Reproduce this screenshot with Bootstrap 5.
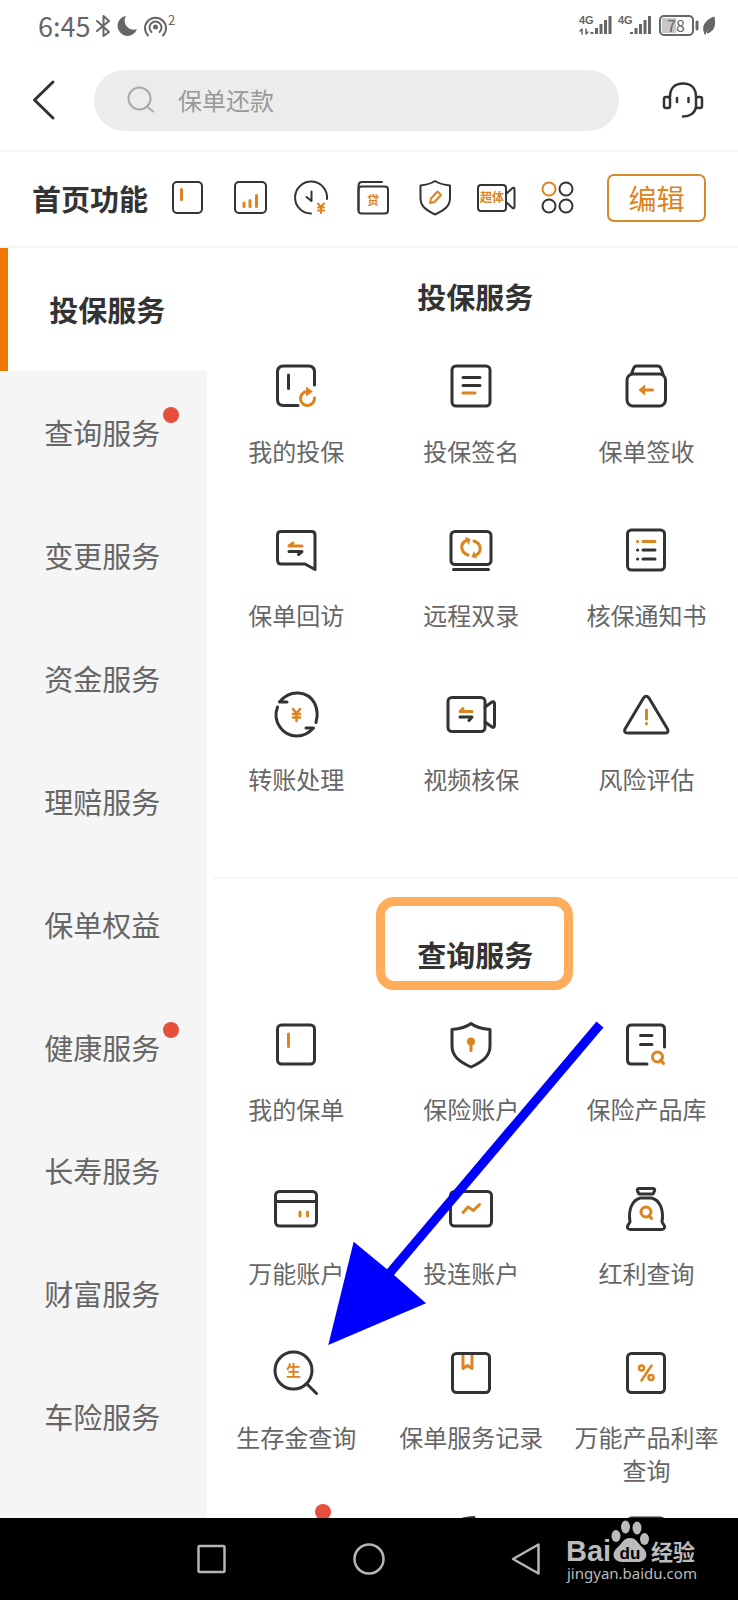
<!DOCTYPE html>
<html lang="zh-CN">
<head>
<meta charset="utf-8">
<meta name="viewport" content="width=device-width, initial-scale=1">
<title>投保服务</title>
<link href="https://cdn.jsdelivr.net/npm/bootstrap@5.3.0/dist/css/bootstrap.min.css" rel="stylesheet">
<style>
  :root { --ink: #333; --soft: #666; --accent: #dd831f; --line: #f6f6f6; }
  body { font-family: "Noto Sans CJK SC", sans-serif; color: var(--ink); background: #fff; }
  svg { display: block; fill: none; stroke: var(--ink); stroke-width: 3; stroke-linecap: round; stroke-linejoin: round; }
  svg text { stroke: none; fill: var(--accent); font-family: "Noto Sans CJK SC", sans-serif; }
  svg .ac { stroke: var(--accent); }
  svg .fa { fill: var(--accent); stroke: none; }
  .plain { background: none; border: 0; padding: 0; }

  .status { height: 52px; padding: 0 20px 0 38px; color: #666; }
  .clock { font-size: 27px; line-height: 52px; }
  .status svg { stroke: #666; stroke-width: 2; }
  .status svg text { fill: #666; }
  .status .net { font-family: "Liberation Sans Narrow", "Liberation Sans", sans-serif; font-weight: 700; }

  .topbar { height: 98px; padding: 0 31px 2px 30px; }
  .search { margin: 0 40px 0 36px; height: 61px; background: #ececec; padding: 0 32px; }
  .search input { font-size: 24px; line-height: 36px; padding: 0; margin-left: 24px; }
  .search input, .search input:focus { background: none; border: 0; box-shadow: none; }
  .search input::placeholder { color: #999; opacity: 1; }
  .search svg { stroke: #aaa; stroke-width: 2; }

  .shortcuts { height: 98px; padding: 0 32px 2px; border-top: 2px solid var(--line); border-bottom: 2px solid var(--line); }
  .heading { font-size: 29px; line-height: 40px; font-weight: 700; margin: 0; }
  .quick { margin: 0 29px 0 20px; }
  .quick svg { stroke-width: 2; }
  .btn-edit { width: 99px; height: 48px; padding: 0; border: 2px solid #d68a2c; border-radius: 7px; font-size: 28px; line-height: 40px; color: var(--accent); }

  .side { width: 28%; background: #f5f5f5; }
  .side a { height: 123px; font-size: 29px; color: var(--soft); padding-right: 2px; }
  .side a.active { background: #fff; color: var(--ink); font-weight: 700; border-left: 8px solid #f07800; padding-right: 0; }
  .dot { width: 16px; height: 16px; border-radius: 50%; background: #e74f3d; position: absolute; }
  .side .dot { right: -19px; top: -4px; }

  .section { margin-left: 6px; }
  .section + .section { border-top: 2px solid var(--line); }
  .section-1 { padding: 28px 0 25px; }
  .section-2 { padding-top: 55px; }
  .section .heading { margin-bottom: 44px; }
  .tiles { margin: 0 4px 0 -4px; }
  .tile { height: 164px; padding: 0 12px; color: var(--soft); font-size: 24px; line-height: 33px; text-decoration: none; text-align: center; }
  .tile svg { margin: 0 auto 22px; width: 52px; height: 52px; }
  .tile .dot { left: 50%; top: -6px; margin-left: 19px; }
  .frame { position: absolute; top: -37px; bottom: -16px; left: -41px; right: -40px; border: 9px solid #ffad5b; border-radius: 18px; }
  .pointer { position: absolute; left: 107px; top: 2px; pointer-events: none; }
  .pointer svg { stroke: none; fill: #00f; }

  .sysnav { height: 82px; background: #000; gap: 109px; }
  .sysnav button { width: 48px; height: 48px; }
  .sysnav svg { stroke: #b5b5b5; stroke-width: 2.500; }
  .sysnav .wm { position: absolute; right: 38px; top: 0; stroke: none; fill: #bbb; }
  .wm text { fill: #bbb; }
  .wm .latin { font-family: "Liberation Sans", sans-serif; font-weight: 700; }
  .wm .paw { fill: #000; }
  .wm .url { font-family: "Noto Sans", sans-serif; }
</style>
</head>
<body>
<div class="vh-100 d-flex flex-column overflow-hidden">

  <div class="status d-flex align-items-center flex-shrink-0">
    <span class="clock">6:45</span>
    <svg class="ms-1" width="88" height="36" viewBox="95 8 88 36">
      <path d="M98 21 110 32 104.500 36V16L110 21 98 31"/>
      <path d="M127 16a10 10 0 1 0 11 13 9 9 0 0 1-11-13z" fill="#666" stroke="none"/>
      <circle cx="156.500" cy="27" r="2.500" fill="#666" stroke="none"/>
      <path d="M152.500 32a6 6 0 1 1 8 0M149 35.500a10.500 10.500 0 1 1 15 0"/>
      <text x="169" y="25" font-size="13">2</text>
    </svg>
    <svg class="ms-auto" width="142" height="36" viewBox="576 8 142 36">
      <text class="net" x="579" y="24" font-size="11">4G</text>
      <text class="net" x="618" y="24" font-size="11">4G</text>
      <path d="M582 34v-5l-2 2M586 29v5l2-2" stroke-width="1.500"/>
      <path d="M592 34v-2M596.500 34v-6M601 34v-10M605.500 34V20M610 34V16M631.500 34v-2M636 34v-6M640.500 34v-10M645 34V20M649.500 34V16" stroke-width="3" stroke-linecap="butt"/>
      <path d="M662 18h14v15h-14z" fill="#c6c6c6" stroke="none"/>
      <rect x="660" y="16" width="33" height="19" rx="4"/>
      <path d="M697 22v7" stroke-width="3"/>
      <text x="676" y="32" font-size="16" text-anchor="middle">78</text>
      <path d="M705 34c-4-8 1-14 9-17 2 9-1 15-7 16l4-9-5 8z" fill="#666" stroke="#666" stroke-width="1"/>
    </svg>
  </div>

  <header class="topbar d-flex align-items-center flex-shrink-0">
    <button class="plain" aria-label="返回">
      <svg width="28" height="44" viewBox="30 78 28 44"><path d="M53 82 34.500 100 53 118"/></svg>
    </button>
    <div class="search flex-grow-1 rounded-pill d-flex align-items-center">
      <svg class="flex-shrink-0" width="28" height="28" viewBox="126 86 28 28"><circle cx="139.500" cy="98.500" r="11"/><path d="m147 106.500 6 5"/></svg>
      <input class="form-control" type="text" placeholder="保单还款" aria-label="搜索">
    </div>
    <button class="plain" aria-label="客服">
      <svg width="48" height="48" viewBox="0 0 48 48">
        <rect x="5" y="21" width="6" height="11" rx="2" stroke-width="2.500"/><rect x="37" y="21" width="6" height="11" rx="2" stroke-width="2.500"/>
        <path d="M11 21C11 12 16 7.500 24 7.500S37 12 37 21M37 31c-1 6-6 9.500-13 9.500M18 22v4M29.500 22v4" stroke-width="2.500"/>
      </svg>
    </button>
  </header>

  <div class="shortcuts d-flex align-items-center flex-shrink-0">
    <h2 class="heading text-nowrap">首页功能</h2>
    <div class="quick flex-grow-1 d-flex justify-content-between">
      <svg width="40" height="40"><rect x="5" y="4" width="29" height="31" rx="4"/><path class="ac" stroke-width="3" d="M13.500 11.500v10"/></svg>
      <svg width="40" height="40"><rect x="5" y="4" width="31" height="31" rx="4"/><path class="ac" stroke-width="3" d="M14 28.500V25M20 28.500v-6M26.500 28.500V17.500"/></svg>
      <svg width="40" height="40"><path d="M36 21A16 16 0 1 0 20 35.500M20.500 13.500v9.500L15.500 19"/><path class="ac" d="m27 25.500 3 3.500 3-3.500M30 29v6M27 29.500h6M27 32.500h6"/></svg>
      <svg width="40" height="40"><path d="M29 4H9Q5.500 4 5.500 8V32"/><rect x="5.500" y="8.500" width="29.500" height="27" rx="3"/><text x="20" y="27" font-size="12" font-weight="700" text-anchor="middle">贷</text></svg>
      <svg width="40" height="40"><path d="M20 3C15 6 11 7 5.500 7.500V20c0 8 5 12 14.500 16.500C30 32 35 28 35 20V7.500C29 7 25 6 20 3z"/><path class="ac" d="m15 25 1-4.500 6.500-7 3.500 3.500-6.500 7z"/></svg>
      <svg width="40" height="40"><rect x="2" y="7" width="28" height="26" rx="3"/><path d="m30 16 6.500-6q2-1 2 1.500v17q0 2.500-2 1.500L30 24"/><text x="16" y="24" font-size="12" font-weight="700" text-anchor="middle">超体</text></svg>
      <svg width="40" height="40"><circle class="ac" cx="11" cy="11" r="6.500"/><circle cx="28" cy="11" r="6.500"/><circle cx="11" cy="28" r="6.500"/><circle cx="28" cy="28" r="6.500"/></svg>
    </div>
    <button class="btn btn-edit">编辑</button>
  </div>

  <main class="d-flex flex-grow-1 overflow-hidden">
    <nav class="side flex-shrink-0">
      <a class="active d-flex align-items-center justify-content-center text-decoration-none" href="#"><span>投保服务</span></a>
      <a class="d-flex align-items-center justify-content-center text-decoration-none" href="#"><span class="position-relative">查询服务<i class="dot"></i></span></a>
      <a class="d-flex align-items-center justify-content-center text-decoration-none" href="#"><span>变更服务</span></a>
      <a class="d-flex align-items-center justify-content-center text-decoration-none" href="#"><span>资金服务</span></a>
      <a class="d-flex align-items-center justify-content-center text-decoration-none" href="#"><span>理赔服务</span></a>
      <a class="d-flex align-items-center justify-content-center text-decoration-none" href="#"><span>保单权益</span></a>
      <a class="d-flex align-items-center justify-content-center text-decoration-none" href="#"><span class="position-relative">健康服务<i class="dot"></i></span></a>
      <a class="d-flex align-items-center justify-content-center text-decoration-none" href="#"><span>长寿服务</span></a>
      <a class="d-flex align-items-center justify-content-center text-decoration-none" href="#"><span>财富服务</span></a>
      <a class="d-flex align-items-center justify-content-center text-decoration-none" href="#"><span>车险服务</span></a>
    </nav>

    <div class="flex-grow-1">
      <section class="section section-1">
        <h2 class="heading text-center">投保服务</h2>
        <div class="tiles row g-0">
          <a class="tile col-4" href="#"><svg viewBox="0 0 52 52"><path d="M44.500 25V12q0-6-6-6h-25q-6 0-6 6v27.500q0 6 6 6H28M18.500 15v13.500"/><path class="ac" d="M44.500 38a7 7 0 1 1-7.500-6.500"/><path class="fa" d="m36 26.500 7 5-7 5z"/></svg>我的投保</a>
          <a class="tile col-4" href="#"><svg viewBox="0 0 52 52"><rect x="7" y="6" width="38" height="40" rx="4"/><path d="M18 17.500h17M18 25.500h17"/><path class="ac" d="M18 33h12"/></svg>投保签名</a>
          <a class="tile col-4" href="#"><svg viewBox="0 0 52 52"><path d="m11.500 14 2-5.500q1-2.500 3-2.500h21q2.500 0 3.500 2.500l2 5.500"/><rect x="7" y="14" width="38.500" height="32" rx="6"/><path class="ac" d="M24 30h8.500"/><path class="fa" d="m18.500 30 6.500-5.500v11z"/></svg>保单签收</a>

          <a class="tile col-4" href="#"><svg viewBox="0 0 52 52"><path d="M45 45.500V11q0-3.500-3.500-3.500H11Q7.500 7.500 7.500 11v25q0 4 3.500 4h24z"/><path class="ac" d="M19 22h13M19 22l4-3"/><path d="M19 27.500h13l-3.500 3"/></svg>保单回访</a>
          <a class="tile col-4" href="#"><svg viewBox="0 0 52 52"><rect x="6" y="7.500" width="40" height="33" rx="4"/><path d="M8.500 45.500h35"/><path class="ac" d="M23 31c-8-3-8-12-1.500-14.500M29 17c8 3 8 11 1.500 14.500"/><path class="fa" d="m20 13 5.500 2-2 6zM32 34.500 26.500 33l2.500-6z"/></svg>远程双录</a>
          <a class="tile col-4" href="#"><svg viewBox="0 0 52 52"><rect x="7.500" y="6" width="37" height="40" rx="4"/><path class="ac" d="M17.500 17.500h.2M23 17.500h12"/><path d="M17.500 26h.2M23 26h12M17.500 35h.2M23 35h12"/></svg>核保通知书</a>

          <a class="tile col-4" href="#"><svg viewBox="0 0 52 52"><path d="M17 14h-7.500C20 .5 38 3 44.500 15c3.500 7 3 14 1.500 19.500M7.500 19C2 34 13 48 27 48c6.500 0 12-3 16.500-8H36"/><path class="ac" d="m23 21 3.500 4.500L30 21M26.500 25.500V33M23 26h7M23 29.500h7" stroke-width="2.500"/></svg>转账处理</a>
          <a class="tile col-4" href="#"><svg viewBox="0 0 52 52"><rect x="3" y="9.500" width="37" height="34" rx="4"/><path d="m40 19 7-5q2.500-1 2.500 2v21q0 3-2.500 2l-7-5"/><path class="ac" d="M15 23.500h12M15 23.500l3-3"/><path d="M15 29h12l-3 3.500"/></svg>视频核保</a>
          <a class="tile col-4" href="#"><svg viewBox="0 0 52 52"><path d="M23.500 10q2.500-3.500 5.500 0l18.500 31q1.500 4-2 4h-38q-4 0-2.500-4z"/><path class="ac" d="M26.500 22v9M26.500 35.500v.2"/></svg>风险评估</a>
        </div>
      </section>

      <section class="section section-2">
        <h2 class="heading text-center"><span class="position-relative d-inline-block">查询服务<i class="frame"></i></span></h2>
        <div class="position-relative">
          <div class="tiles row g-0">
            <a class="tile col-4" href="#"><svg viewBox="0 0 52 52"><rect x="7.500" y="7" width="37" height="39" rx="4"/><path class="ac" d="M18.500 16v12.500"/></svg>我的保单</a>
            <a class="tile col-4" href="#"><svg viewBox="0 0 52 52"><path d="M26 5.500c-5 4-12 5.500-19 6V28c0 10 7 15.500 19 21 12-5.500 19-11 19-21V11.500c-7-.5-14-2-19-6z"/><circle class="fa" cx="26" cy="23.500" r="4"/><path class="ac" d="M26 24v8.500"/></svg>保险账户</a>
            <a class="tile col-4" href="#"><svg viewBox="0 0 52 52"><path d="M44.500 29V11q0-4-4-4h-29q-4 0-4 4v31q0 4 4 4H27M20.500 17.500H32M20.500 26.500H32"/><circle class="ac" cx="37.500" cy="39" r="5"/><path class="ac" d="m40.500 42 3 3.500"/></svg>保险产品库</a>

            <a class="tile col-4" href="#"><svg viewBox="0 0 52 52"><rect x="5.500" y="9.500" width="41" height="34.500" rx="4"/><path d="M6 19.500h40"/><path class="ac" d="M30 30v4M37.500 30v4"/></svg>万能账户</a>
            <a class="tile col-4" href="#"><svg viewBox="0 0 52 52"><rect x="5.500" y="9.500" width="41" height="34.500" rx="4"/><path class="ac" d="m18 30.500 5-5.500 5.500 3.500 6-6"/></svg>投连账户</a>
            <a class="tile col-4" href="#"><svg viewBox="0 0 52 52"><path d="M19.500 6.500h13q3 0 2 2.500l-1.500 3h-14l-1.500-3q-1-2.500 2-2.500zM20.500 16C12 18 8 28 10 40L7.500 44q-.5 3.500 3 3.500h31q3.500 0 3-3.500L42 40C44 28 40 18 31.500 16z"/><circle class="ac" cx="26" cy="30" r="5"/><path class="ac" d="m29 33.500 2.500 3"/></svg>红利查询</a>

            <a class="tile col-4" href="#"><svg viewBox="0 0 52 52"><circle cx="23.500" cy="24.500" r="18.500"/><path d="m37 38 9.500 9.500"/><text x="23.500" y="30" font-size="15" font-weight="700" text-anchor="middle">生</text></svg>生存金查询</a>
            <a class="tile col-4" href="#"><svg viewBox="0 0 52 52"><path class="ac" d="M18 8v14.500l4.500-3 4.500 3V8"/><rect x="7.500" y="7.500" width="37" height="39" rx="4"/></svg>保单服务记录</a>
            <a class="tile col-4" href="#"><svg viewBox="0 0 52 52"><rect x="7.500" y="7.500" width="37" height="39" rx="4"/><g class="ac" stroke-width="2.500"><circle cx="21.500" cy="22" r="2.500"/><circle cx="31" cy="31.500" r="2.500"/><path d="m31.500 19.500-10 15"/></g></svg>万能产品利率查询</a>

            <a class="tile col-4 position-relative" href="#" aria-label="更多"><i class="dot"></i></a>
            <a class="tile col-4" href="#" aria-label="更多"><svg viewBox="0 0 52 52"><path d="M18 9q6-1.500 11-1.500"/></svg></a>
            <a class="tile col-4" href="#" aria-label="更多"><svg viewBox="0 0 52 52"><rect x="7.500" y="8" width="37" height="39" rx="4"/></svg></a>
          </div>
          <div class="pointer">
            <svg width="290" height="330" viewBox="319 1020 290 330"><path d="m595.500 1021.500 7 6L393 1275l32 28.300L327.300 1345l25.400-103.300 33.300 27.600z"/></svg>
          </div>
        </div>
      </section>
    </div>
  </main>

  <nav class="sysnav position-relative d-flex align-items-center justify-content-center flex-shrink-0">
    <button class="plain" aria-label="最近任务"><svg width="48" height="48"><rect x="10.500" y="11" width="26" height="26" rx="1"/></svg></button>
    <button class="plain" aria-label="主页"><svg width="48" height="48"><circle cx="24" cy="24" r="14.500"/></svg></button>
    <button class="plain" aria-label="后退"><svg width="48" height="48"><path d="M36.500 9.500v29L11 24z"/></svg></button>
    <svg class="wm" width="134" height="70" viewBox="566 1518 134 70">
      <text class="latin" x="566" y="1561" font-size="29">Bai</text>
      <ellipse cx="616" cy="1536" rx="4.500" ry="6"/><ellipse cx="625.500" cy="1527" rx="4.500" ry="6.500"/><ellipse cx="637" cy="1528" rx="4.500" ry="6.500"/><ellipse cx="644.500" cy="1539" rx="4.500" ry="6"/>
      <path d="M630 1538c6 0 8 5 12 9 4 3.500 6 8 3 12-3 4-9 3-15 3s-12 1-15-3c-3-4-1-8.500 3-12 4-4 6-9 12-9z"/>
      <text class="latin" x="630" y="1559" font-size="17" text-anchor="middle"><tspan class="paw">du</tspan></text>
      <text x="651" y="1560" font-size="22" font-weight="700">经验</text>
      <text class="url" x="567" y="1579" font-size="15">jingyan.baidu.com</text>
    </svg>
  </nav>
</div>
<script src="https://cdn.jsdelivr.net/npm/bootstrap@5.3.0/dist/js/bootstrap.bundle.min.js"></script>
</body>
</html>
